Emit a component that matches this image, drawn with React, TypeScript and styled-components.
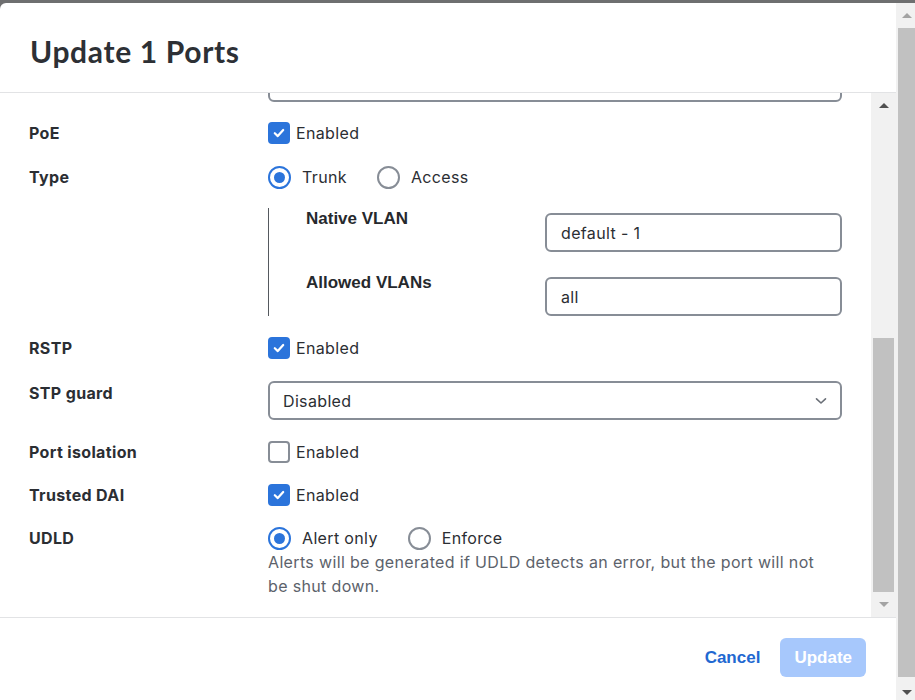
import React, { useLayoutEffect, useRef } from 'react';
import styled, { createGlobalStyle } from 'styled-components';

const GlobalStyle = createGlobalStyle`
  html, body {
    margin: 0;
    padding: 0;
    overflow: hidden;
  }
  body {
    font-family: Inter, "Noto Sans", sans-serif;
    color: #2b2e33;
    letter-spacing: 0.35px;
  }
`;

const BLUE = '#2b74db';
const GREY_LINE = '#878d96';

const Backdrop = styled.div`
  width: 915px;
  height: 700px;
  box-sizing: border-box;
  padding-top: 3px;
  background: #6e6f70;
  display: flex;
  overflow: hidden;
`;

const Modal = styled.div`
  flex: 1;
  min-width: 0;
  background: #fff;
  border-radius: 6px 0 0 0;
  display: flex;
  flex-direction: column;
`;

const Header = styled.header`
  height: 90px;
  flex-shrink: 0;
  box-sizing: border-box;
  border-bottom: 1px solid #e2e3e5;
  display: flex;
  align-items: center;
  padding: 7px 0 0 30px;
`;

const Title = styled.h1`
  margin: 0;
  font-family: Lato, "Noto Sans", sans-serif;
  font-weight: 700;
  font-size: 30px;
  color: #2d3035;
  letter-spacing: 0.65px;
`;

const BodyArea = styled.div`
  height: 524px;
  display: flex;
  flex-shrink: 0;
`;

const ScrollPane = styled.div`
  flex: 1;
  overflow-y: auto;
  scrollbar-width: none;
  &::-webkit-scrollbar {
    display: none;
  }
`;

const Content = styled.div`
  display: flex;
  flex-direction: column;
  gap: 19px;
  padding: 0 29px 19px 29px;
`;

const Row = styled.div<{ $top?: boolean; $extra?: number }>`
  display: grid;
  grid-template-columns: 239px 1fr;
  align-items: ${(p) => (p.$top ? 'start' : 'center')};
  min-height: 24px;
  margin-top: ${(p) => p.$extra || 0}px;
`;

const Label = styled.div`
  font-weight: 700;
  font-size: 16px;
  line-height: 24px;
  color: #2b2e33;
`;

const Control = styled.div`
  display: flex;
  flex-direction: column;
`;

const TextField = styled.div`
  height: 39px;
  box-sizing: border-box;
  border: 2px solid ${GREY_LINE};
  border-radius: 6px;
  padding: 0 14px;
  display: flex;
  align-items: center;
  font-size: 16px;
  color: #2b2e33;
`;

const SelectField = styled(TextField)`
  justify-content: space-between;
  padding: 0 13px;
`;

const CheckLine = styled.label`
  display: flex;
  align-items: center;
  gap: 6px;
  font-size: 16px;
  line-height: 24px;
  color: #2b2e33;
`;

const Box = styled.span<{ $on: boolean }>`
  width: 22px;
  height: 22px;
  box-sizing: border-box;
  border-radius: 4px;
  background: ${(p) => (p.$on ? BLUE : '#fff')};
  border: ${(p) => (p.$on ? 'none' : `2px solid ${GREY_LINE}`)};
  display: flex;
  align-items: center;
  justify-content: center;
`;

const RadioGroup = styled.div`
  display: flex;
  gap: 30px;
`;

const RadioLine = styled.label`
  display: flex;
  align-items: center;
  gap: 11px;
  font-size: 16px;
  line-height: 24px;
  color: #2b2e33;
`;

const Circle = styled.span<{ $on: boolean }>`
  width: 23px;
  height: 23px;
  box-sizing: border-box;
  border-radius: 50%;
  border: 2px solid ${(p) => (p.$on ? BLUE : GREY_LINE)};
  display: flex;
  align-items: center;
  justify-content: center;
  &::after {
    content: '';
    width: 11px;
    height: 11px;
    border-radius: 50%;
    background: ${(p) => (p.$on ? BLUE : 'transparent')};
  }
`;

const Help = styled.div`
  max-width: 560px;
  font-size: 16px;
  line-height: 24px;
  color: #5c626b;
`;

const Nested = styled.div`
  margin-left: 239px;
  border-left: 1px solid #55595f;
  padding-left: 37px;
  display: flex;
  flex-direction: column;
  gap: 20px;
`;

const NestedRow = styled.div`
  display: grid;
  grid-template-columns: 239px 1fr;
  align-items: start;
`;

const NestedLabel = styled.div`
  font-family: "Liberation Sans", Arial, sans-serif;
  font-weight: 700;
  font-size: 17px;
  line-height: 24px;
  letter-spacing: 0;
  margin-top: -1px;
  color: #26292d;
`;

const NestedField = styled(TextField)`
  margin-top: 5px;
`;

const Footer = styled.footer`
  flex: 1;
  border-top: 1px solid #e2e3e5;
  display: flex;
  justify-content: flex-end;
  align-items: flex-start;
  gap: 20px;
  padding: 20px 30px 0 0;
`;

const CancelButton = styled.button`
  height: 39px;
  border: none;
  background: none;
  padding: 0;
  font-family: "Liberation Sans", Arial, sans-serif;
  font-weight: 700;
  font-size: 17px;
  color: #2168d1;
`;

const PrimaryButton = styled.button`
  height: 39px;
  border: none;
  border-radius: 6px;
  padding: 0 14px;
  background: #a7c8fc;
  color: #fff;
  font-family: "Liberation Sans", Arial, sans-serif;
  font-weight: 700;
  font-size: 17px;
`;

const ScrollBar = styled.div<{ $w: number }>`
  width: ${(p) => p.$w}px;
  flex-shrink: 0;
  background: #f1f1f1;
  display: flex;
  flex-direction: column;
`;

const ArrowButton = styled.div<{ $h: number; $pad?: number }>`
  height: ${(p) => p.$h}px;
  flex-shrink: 0;
  display: flex;
  justify-content: center;
  align-items: ${(p) => (p.$pad ? 'flex-start' : 'center')};
  padding-top: ${(p) => p.$pad || 0}px;
  box-sizing: border-box;
`;

const Arrow = styled.span<{ $up: boolean; $dark: boolean; $shift?: number }>`
  width: 0;
  height: 0;
  margin-left: ${(p) => p.$shift || 0}px;
  border-left: 5px solid transparent;
  border-right: 5px solid transparent;
  ${(p) =>
    p.$up
      ? `border-bottom: 5px solid ${p.$dark ? '#505050' : '#a3a3a3'};`
      : `border-top: 5px solid ${p.$dark ? '#505050' : '#a3a3a3'};`}
`;

const Track = styled.div<{ $end?: boolean }>`
  flex: 1;
  display: flex;
  flex-direction: column;
  justify-content: ${(p) => (p.$end ? 'flex-end' : 'stretch')};
`;

const Thumb = styled.div<{ $h?: number; $ml: number; $mr: number }>`
  background: #c1c1c1;
  margin: 0 ${(p) => p.$mr}px 0 ${(p) => p.$ml}px;
  ${(p) => (p.$h ? `height: ${p.$h}px;` : 'flex: 1;')}
`;

const Check = ({ on, label }: { on: boolean; label: string }) => (
  <CheckLine>
    <Box $on={on}>
      {on && (
        <svg width="14" height="14" viewBox="0 0 14 14">
          <path d="M2.8 7.2 L5.8 10.1 L11.2 4" fill="none" stroke="#fff" strokeWidth="2.2" strokeLinecap="round" strokeLinejoin="round" />
        </svg>
      )}
    </Box>
    {label}
  </CheckLine>
);

const Radios = ({ options, value }: { options: string[]; value: string }) => (
  <RadioGroup>
    {options.map((o) => (
      <RadioLine key={o}>
        <Circle $on={o === value} />
        {o}
      </RadioLine>
    ))}
  </RadioGroup>
);

const App = () => {
  const paneRef = useRef<HTMLDivElement>(null);

  useLayoutEffect(() => {
    if (paneRef.current) {
      paneRef.current.scrollTop = paneRef.current.scrollHeight;
    }
  }, []);

  return (
    <>
      <GlobalStyle />
      <Backdrop>
        <Modal>
          <Header>
            <Title>Update 1 Ports</Title>
          </Header>
          <BodyArea>
            <ScrollPane ref={paneRef}>
              <Content>
                <Row $top>
                  <Label />
                  <TextField />
                </Row>
                <Row>
                  <Label>PoE</Label>
                  <Check on label="Enabled" />
                </Row>
                <Row $extra={1}>
                  <Label>Type</Label>
                  <Radios options={['Trunk', 'Access']} value="Trunk" />
                </Row>
                <Nested>
                  <NestedRow>
                    <NestedLabel>Native VLAN</NestedLabel>
                    <NestedField>default - 1</NestedField>
                  </NestedRow>
                  <NestedRow>
                    <NestedLabel>Allowed VLANs</NestedLabel>
                    <NestedField>all</NestedField>
                  </NestedRow>
                </Nested>
                <Row $extra={1}>
                  <Label>RSTP</Label>
                  <Check on label="Enabled" />
                </Row>
                <Row $top $extra={2}>
                  <Label>STP guard</Label>
                  <SelectField>
                    Disabled
                    <svg width="12" height="8" viewBox="0 0 12 8">
                      <path d="M1.5 1.8 L6 6 L10.5 1.8" fill="none" stroke="#6b7078" strokeWidth="1.6" strokeLinecap="round" strokeLinejoin="round" />
                    </svg>
                  </SelectField>
                </Row>
                <Row $extra={1}>
                  <Label>Port isolation</Label>
                  <Check on={false} label="Enabled" />
                </Row>
                <Row>
                  <Label>Trusted DAI</Label>
                  <Check on label="Enabled" />
                </Row>
                <Row $top>
                  <Label>UDLD</Label>
                  <Control>
                    <Radios options={['Alert only', 'Enforce']} value="Alert only" />
                    <Help>
                      Alerts will be generated if UDLD detects an error, but the port will not be shut down.
                    </Help>
                  </Control>
                </Row>
              </Content>
            </ScrollPane>
            <ScrollBar $w={25}>
              <ArrowButton $h={25}>
                <Arrow $up $dark />
              </ArrowButton>
              <Track $end>
                <Thumb $h={254} $ml={2} $mr={2} />
              </Track>
              <ArrowButton $h={25}>
                <Arrow $up={false} $dark={false} />
              </ArrowButton>
            </ScrollBar>
          </BodyArea>
          <Footer>
            <CancelButton>Cancel</CancelButton>
            <PrimaryButton>Update</PrimaryButton>
          </Footer>
        </Modal>
        <ScrollBar $w={19}>
          <ArrowButton $h={25}>
            <Arrow $up $dark={false} $shift={3} />
          </ArrowButton>
          <Track>
            <Thumb $ml={2} $mr={0} />
          </Track>
          <ArrowButton $h={23} $pad={13}>
            <Arrow $up={false} $dark $shift={3} />
          </ArrowButton>
        </ScrollBar>
      </Backdrop>
    </>
  );
};

export default App;
